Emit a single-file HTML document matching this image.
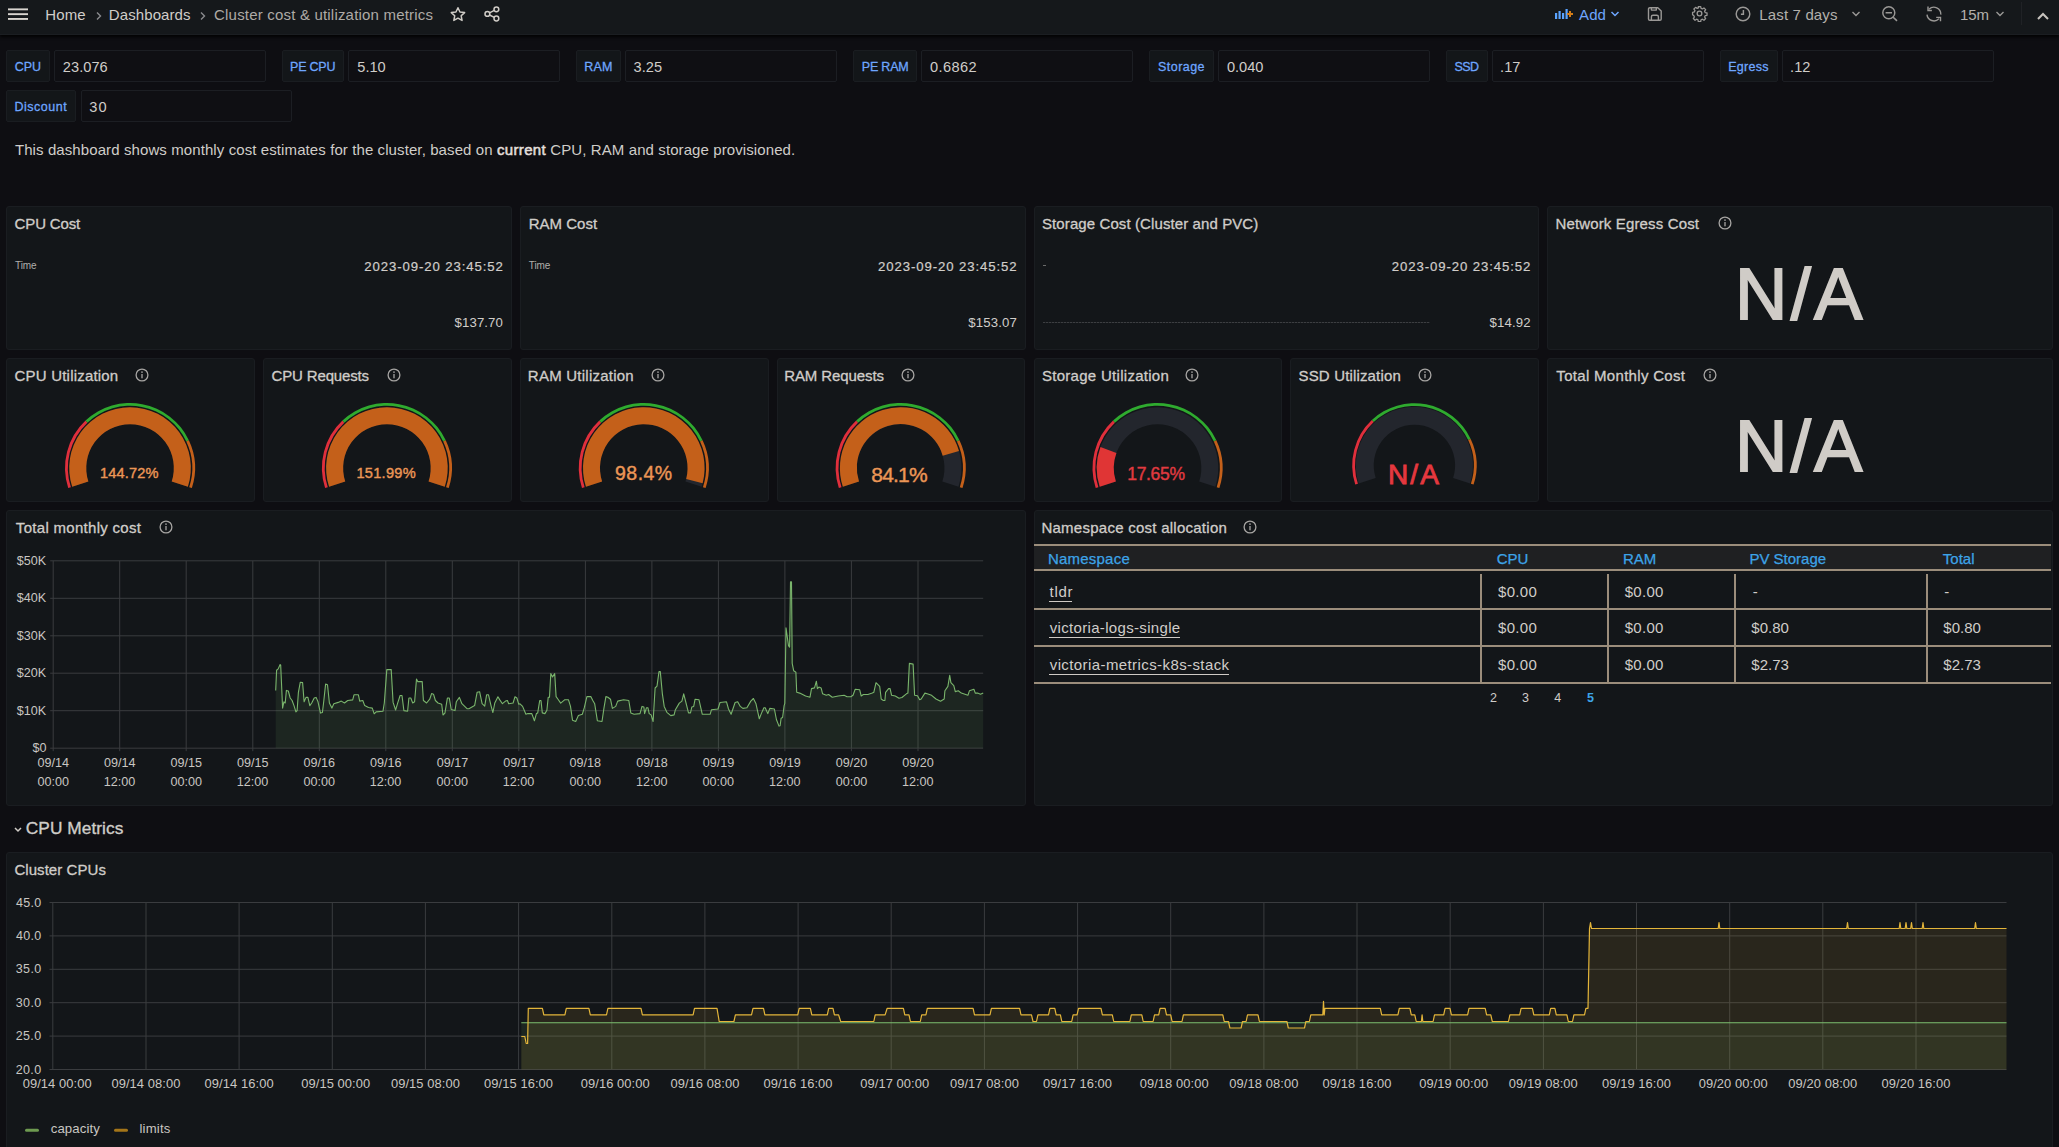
<!DOCTYPE html><html><head><meta charset="utf-8"><style>
*{box-sizing:border-box;margin:0;padding:0}
html,body{width:2059px;height:1147px;overflow:hidden;background:#0e0e12;font-family:"Liberation Sans",sans-serif;color:#d0cdc9}
.a{position:absolute;white-space:nowrap}
.box{position:absolute;border-radius:2px}
.p{position:absolute;background:#131619;border:1px solid #1a1d21;border-radius:3px}
</style></head><body>
<div class="a" style="left:0;top:0;width:2059px;height:35px;background:#15181b;border-bottom:1px solid #1b1e22;box-shadow:0 2px 3px rgba(0,0,0,0.85)"></div>
<svg class="a" style="left:0;top:0" width="40" height="35"><rect x="8" y="8.4" width="20" height="1.9" fill="#d8d4cf"/><rect x="8" y="13.2" width="20" height="1.9" fill="#d8d4cf"/><rect x="8" y="18" width="20" height="1.9" fill="#d8d4cf"/></svg>
<div class="a" style="top:14.60px;font-size:15px;color:#d0cdc9;line-height:0;letter-spacing:0.133px;left:45.30px;">Home</div>
<svg class="a" style="left:95px;top:10px" width="8" height="12" viewBox="0 0 8 12"><path d="M2 2.5 L5.5 6 L2 9.5" stroke="#8a8a8e" stroke-width="1.4" fill="none"/></svg>
<div class="a" style="top:14.60px;font-size:15px;color:#d0cdc9;line-height:0;letter-spacing:0.097px;left:108.80px;">Dashboards</div>
<svg class="a" style="left:199px;top:10px" width="8" height="12" viewBox="0 0 8 12"><path d="M2 2.5 L5.5 6 L2 9.5" stroke="#8a8a8e" stroke-width="1.4" fill="none"/></svg>
<div class="a" style="top:14.60px;font-size:15px;color:#aeaaa6;line-height:0;letter-spacing:0.192px;left:214.05px;">Cluster cost &amp; utilization metrics</div>
<svg class="a" style="left:448px;top:5px" width="20" height="20" viewBox="0 0 20 20"><path d="M9.95 2.75 L11.95 7.00 L16.61 7.59 L13.18 10.80 L14.06 15.41 L9.95 13.15 L5.84 15.41 L6.72 10.80 L3.29 7.59 L7.95 7.00Z" fill="none" stroke="#d0ccc7" stroke-width="1.5" stroke-linejoin="round"/></svg>
<svg class="a" style="left:484px;top:6px" width="16" height="16" viewBox="0 0 16 16"><circle cx="12.4" cy="3.35" r="2.4" fill="none" stroke="#d0ccc7" stroke-width="1.5"/><circle cx="12.4" cy="12.5" r="2.4" fill="none" stroke="#d0ccc7" stroke-width="1.5"/><circle cx="3.4" cy="7.9" r="2.4" fill="none" stroke="#d0ccc7" stroke-width="1.5"/><path d="M5.5 6.8 L10.3 4.4 M5.5 9 L10.3 11.4" stroke="#d0ccc7" stroke-width="1.5"/></svg>
<svg class="a" style="left:1554px;top:8px" width="20" height="12" viewBox="0 0 20 12"><rect x="1" y="5" width="2.2" height="6" fill="#5aa3ff"/><rect x="4.5" y="3" width="2.2" height="8" fill="#5aa3ff"/><rect x="8" y="5" width="2.2" height="6" fill="#5aa3ff"/><rect x="11.5" y="1" width="2.2" height="10" fill="#5aa3ff"/><path d="M16 3 V9 M13 6 H19" stroke="#d27c18" stroke-width="2"/></svg>
<div class="a" style="top:14.60px;font-size:15px;color:#6ea6ff;line-height:0;letter-spacing:0.137px;left:1579.00px;">Add</div>
<svg class="a" style="left:1610px;top:10px" width="10" height="8" viewBox="0 0 10 8"><path d="M1.5 2 L5 5.5 L8.5 2" stroke="#6ea6ff" stroke-width="1.5" fill="none"/></svg>
<svg class="a" style="left:1647px;top:6px" width="16" height="16" viewBox="0 0 16 16"><path d="M2.8 1.7 H10.8 L14.2 5.1 V12.9 a1.3 1.3 0 0 1 -1.3 1.3 H2.8 a1.3 1.3 0 0 1 -1.3 -1.3 V3 a1.3 1.3 0 0 1 1.3 -1.3z M4.4 1.7 V4.1 H9.3 V1.7 M4.4 14.2 V10.8 a1.6 1.6 0 0 1 1.6 -1.6 H9.8 a1.6 1.6 0 0 1 1.6 1.6 V14.2" fill="none" stroke="#9a9896" stroke-width="1.4" stroke-linejoin="round"/></svg>
<svg class="a" style="left:1690.5px;top:5.3px" width="17" height="17" viewBox="0 0 24 24"><circle cx="12" cy="12" r="3.3" fill="none" stroke="#9a9896" stroke-width="1.9"/><path d="M10.3 2.2h3.4l.5 2.6 1.9.8 2.2-1.5 2.4 2.4-1.5 2.2.8 1.9 2.6.5v3.4l-2.6.5-.8 1.9 1.5 2.2-2.4 2.4-2.2-1.5-1.9.8-.5 2.6h-3.4l-.5-2.6-1.9-.8-2.2 1.5-2.4-2.4 1.5-2.2-.8-1.9L2.2 13.7v-3.4l2.6-.5.8-1.9-1.5-2.2 2.4-2.4 2.2 1.5 1.9-.8z" fill="none" stroke="#9a9896" stroke-width="1.8" stroke-linejoin="round"/></svg>
<svg class="a" style="left:1735px;top:6px" width="16" height="16" viewBox="0 0 16 16"><circle cx="8" cy="8" r="6.8" fill="none" stroke="#9a9896" stroke-width="1.45"/><path d="M8.4 4 V8.3 H5.9" fill="none" stroke="#9a9896" stroke-width="1.45"/></svg>
<div class="a" style="top:14.80px;font-size:15px;color:#b3b0ac;line-height:0;letter-spacing:0.150px;left:1759.30px;">Last 7 days</div>
<svg class="a" style="left:1851px;top:10px" width="10" height="8" viewBox="0 0 10 8"><path d="M1.5 2 L5 5.5 L8.5 2" stroke="#9a9896" stroke-width="1.4" fill="none"/></svg>
<svg class="a" style="left:1881px;top:5.2px" width="18" height="17" viewBox="0 0 18 17"><circle cx="7.8" cy="7.7" r="6.0" fill="none" stroke="#9a9896" stroke-width="1.45"/><path d="M4.6 7.7 H11 M12.2 12.2 L16 15.9" stroke="#9a9896" stroke-width="1.6"/></svg>
<svg class="a" style="left:1922px;top:3px" width="24" height="22" viewBox="0 0 24 22"><path d="M7.0 6.3 A6.9 6.9 0 0 1 18.8 11.6 M5.0 11.6 A6.9 6.9 0 0 0 17.0 15.6" fill="none" stroke="#9a9896" stroke-width="1.4"/><path d="M6.0 3.4 V7.5 H9.9 M14.2 14.4 H18.5 V18.3" fill="none" stroke="#9a9896" stroke-width="1.4"/></svg>
<div class="a" style="top:14.80px;font-size:15px;color:#b3b0ac;line-height:0;letter-spacing:-0.037px;left:1959.88px;">15m</div>
<svg class="a" style="left:1995px;top:10px" width="10" height="8" viewBox="0 0 10 8"><path d="M1.5 2 L5 5.5 L8.5 2" stroke="#9a9896" stroke-width="1.4" fill="none"/></svg>
<div class="a" style="left:2021px;top:2px;width:1px;height:23px;background:#202226"></div>
<svg class="a" style="left:2036px;top:11px" width="14" height="10" viewBox="0 0 14 10"><path d="M2 8 L7 3 L12 8" stroke="#c8c4bf" stroke-width="2" fill="none"/></svg>
<div class="box" style="left:6px;top:50px;width:44px;height:32px;background:#131619;border:1px solid #1a1d21"></div>
<div class="box" style="left:54px;top:50px;width:212px;height:32px;background:#0f0f13;border:1px solid #1c1e23"></div>
<div class="a" style="top:66.87px;font-size:12.5px;color:#6ea6ff;line-height:0;letter-spacing:-0.146px;-webkit-text-stroke:0.28px #6ea6ff;left:14.82px;">CPU</div>
<div class="a" style="top:67.14px;font-size:14.6px;color:#d0cdc9;line-height:0;letter-spacing:0.048px;left:62.87px;">23.076</div>
<div class="box" style="left:282px;top:50px;width:62px;height:32px;background:#131619;border:1px solid #1a1d21"></div>
<div class="box" style="left:348px;top:50px;width:212px;height:32px;background:#0f0f13;border:1px solid #1c1e23"></div>
<div class="a" style="top:66.87px;font-size:12.5px;color:#6ea6ff;line-height:0;letter-spacing:-0.228px;-webkit-text-stroke:0.28px #6ea6ff;left:290.04px;">PE CPU</div>
<div class="a" style="top:67.14px;font-size:14.6px;color:#d0cdc9;line-height:0;left:357.32px;">5.10</div>
<div class="box" style="left:576px;top:50px;width:45px;height:32px;background:#131619;border:1px solid #1a1d21"></div>
<div class="box" style="left:625px;top:50px;width:212px;height:32px;background:#0f0f13;border:1px solid #1c1e23"></div>
<div class="a" style="top:66.87px;font-size:12.5px;color:#6ea6ff;line-height:0;letter-spacing:0.135px;-webkit-text-stroke:0.28px #6ea6ff;left:584.34px;">RAM</div>
<div class="a" style="top:67.14px;font-size:14.6px;color:#d0cdc9;line-height:0;left:633.62px;">3.25</div>
<div class="box" style="left:853px;top:50px;width:64px;height:32px;background:#131619;border:1px solid #1a1d21"></div>
<div class="box" style="left:921px;top:50px;width:212px;height:32px;background:#0f0f13;border:1px solid #1c1e23"></div>
<div class="a" style="top:66.87px;font-size:12.5px;color:#6ea6ff;line-height:0;letter-spacing:-0.211px;-webkit-text-stroke:0.28px #6ea6ff;left:861.84px;">PE RAM</div>
<div class="a" style="top:67.14px;font-size:14.6px;color:#d0cdc9;line-height:0;letter-spacing:0.368px;left:930.12px;">0.6862</div>
<div class="box" style="left:1149px;top:50px;width:65px;height:32px;background:#131619;border:1px solid #1a1d21"></div>
<div class="box" style="left:1218px;top:50px;width:212px;height:32px;background:#0f0f13;border:1px solid #1c1e23"></div>
<div class="a" style="top:66.87px;font-size:12.5px;color:#6ea6ff;line-height:0;letter-spacing:0.466px;-webkit-text-stroke:0.28px #6ea6ff;left:1157.98px;">Storage</div>
<div class="a" style="top:67.14px;font-size:14.6px;color:#d0cdc9;line-height:0;left:1226.92px;">0.040</div>
<div class="box" style="left:1446px;top:50px;width:42px;height:32px;background:#131619;border:1px solid #1a1d21"></div>
<div class="box" style="left:1492px;top:50px;width:212px;height:32px;background:#0f0f13;border:1px solid #1c1e23"></div>
<div class="a" style="top:66.87px;font-size:12.5px;color:#6ea6ff;line-height:0;letter-spacing:-0.521px;-webkit-text-stroke:0.28px #6ea6ff;left:1454.38px;">SSD</div>
<div class="a" style="top:67.14px;font-size:14.6px;color:#d0cdc9;line-height:0;left:1500.09px;">.17</div>
<div class="box" style="left:1720px;top:50px;width:58px;height:32px;background:#131619;border:1px solid #1a1d21"></div>
<div class="box" style="left:1782px;top:50px;width:212px;height:32px;background:#0f0f13;border:1px solid #1c1e23"></div>
<div class="a" style="top:66.87px;font-size:12.5px;color:#6ea6ff;line-height:0;letter-spacing:0.297px;-webkit-text-stroke:0.28px #6ea6ff;left:1728.24px;">Egress</div>
<div class="a" style="top:67.14px;font-size:14.6px;color:#d0cdc9;line-height:0;left:1790.09px;">.12</div>
<div class="box" style="left:6px;top:90px;width:70px;height:32px;background:#131619;border:1px solid #1a1d21"></div>
<div class="box" style="left:81px;top:90px;width:211px;height:32px;background:#0f0f13;border:1px solid #1c1e23"></div>
<div class="a" style="top:106.87px;font-size:12.5px;color:#6ea6ff;line-height:0;letter-spacing:0.508px;-webkit-text-stroke:0.28px #6ea6ff;left:14.44px;">Discount</div>
<div class="a" style="top:107.14px;font-size:14.6px;color:#d0cdc9;line-height:0;letter-spacing:1.289px;left:89.22px;">30</div>
<div class="a" style="left:14.90px;top:149.70px;font-size:15px;line-height:0;color:#d0cdc9;letter-spacing:0.097px">This dashboard shows monthly cost estimates for the cluster, based on <span style="-webkit-text-stroke:0.55px #e2dfdb;color:#e2dfdb;letter-spacing:0.35px">current</span> CPU, RAM and storage provisioned.</div>
<div class="p" style="left:6.00px;top:206px;width:505.75px;height:144px"></div>
<div class="p" style="left:519.75px;top:206px;width:505.75px;height:144px"></div>
<div class="p" style="left:1033.50px;top:206px;width:505.75px;height:144px"></div>
<div class="p" style="left:1547.25px;top:206px;width:505.75px;height:144px"></div>
<div class="a" style="top:224.20px;font-size:15px;color:#d0cdc9;line-height:0;letter-spacing:-0.150px;-webkit-text-stroke:0.3px #d0cdc9;left:14.60px;">CPU Cost</div>
<div class="a" style="top:224.20px;font-size:15px;color:#d0cdc9;line-height:0;letter-spacing:0.021px;-webkit-text-stroke:0.3px #d0cdc9;left:528.65px;">RAM Cost</div>
<div class="a" style="top:224.20px;font-size:15px;color:#d0cdc9;line-height:0;letter-spacing:0.100px;-webkit-text-stroke:0.3px #d0cdc9;left:1041.98px;">Storage Cost (Cluster and PVC)</div>
<div class="a" style="top:224.20px;font-size:15px;color:#d0cdc9;line-height:0;letter-spacing:0.146px;-webkit-text-stroke:0.3px #d0cdc9;left:1555.45px;">Network Egress Cost</div>
<svg class="a" style="left:1717.5px;top:215.7px" width="14" height="14" viewBox="0 0 14 14"><circle cx="7" cy="7" r="5.9" fill="none" stroke="#a7a5a3" stroke-width="1.3"/><rect x="6.35" y="6" width="1.3" height="4.3" fill="#a7a5a3"/><circle cx="7" cy="4.1" r="0.85" fill="#a7a5a3"/></svg>
<div class="a" style="top:265.54px;font-size:10px;color:#b0aeab;line-height:0;letter-spacing:-0.067px;left:15.00px;">Time</div>
<div class="a" style="top:267.03px;font-size:13.2px;color:#d0cdc9;line-height:0;letter-spacing:0.903px;-webkit-text-stroke:0.2px #d0cdc9;left:364.19px;">2023-09-20 23:45:52</div>
<div class="a" style="top:265.54px;font-size:10px;color:#b0aeab;line-height:0;letter-spacing:-0.067px;left:528.75px;">Time</div>
<div class="a" style="top:267.03px;font-size:13.2px;color:#d0cdc9;line-height:0;letter-spacing:0.903px;-webkit-text-stroke:0.2px #d0cdc9;left:877.94px;">2023-09-20 23:45:52</div>
<div class="a" style="left:1043.0px;top:265px;width:3px;height:1px;background:#6a6a6a"></div>
<div class="a" style="left:1042.5px;top:322px;width:387px;height:1px;background:repeating-linear-gradient(90deg,#3c3e41 0 2px,#202326 2px 3px)"></div>
<div class="a" style="top:267.03px;font-size:13.2px;color:#d0cdc9;line-height:0;letter-spacing:0.903px;-webkit-text-stroke:0.2px #d0cdc9;left:1391.69px;">2023-09-20 23:45:52</div>
<div class="a" style="top:322.53px;font-size:13.2px;color:#d0cdc9;line-height:0;letter-spacing:0.096px;left:454.62px;">$137.70</div>
<div class="a" style="top:322.53px;font-size:13.2px;color:#d0cdc9;line-height:0;letter-spacing:0.129px;left:968.37px;">$153.07</div>
<div class="a" style="top:322.53px;font-size:13.2px;color:#d0cdc9;line-height:0;letter-spacing:0.152px;left:1489.46px;">$14.92</div>
<div class="a" style="top:293.88px;font-size:72.5px;color:#d0ccc7;line-height:0;letter-spacing:3.244px;-webkit-text-stroke:1.8px #d0ccc7;left:1735.10px;">N/A</div>
<div class="p" style="left:6.00px;top:358px;width:248.88px;height:144px"></div>
<div class="a" style="top:376.20px;font-size:15px;color:#d0cdc9;line-height:0;letter-spacing:0.196px;-webkit-text-stroke:0.3px #d0cdc9;left:14.60px;">CPU Utilization</div>
<svg class="a" style="left:135.0px;top:367.7px" width="14" height="14" viewBox="0 0 14 14"><circle cx="7" cy="7" r="5.9" fill="none" stroke="#a7a5a3" stroke-width="1.3"/><rect x="6.35" y="6" width="1.3" height="4.3" fill="#a7a5a3"/><circle cx="7" cy="4.1" r="0.85" fill="#a7a5a3"/></svg>
<div class="p" style="left:262.88px;top:358px;width:248.88px;height:144px"></div>
<div class="a" style="top:376.20px;font-size:15px;color:#d0cdc9;line-height:0;letter-spacing:-0.159px;-webkit-text-stroke:0.3px #d0cdc9;left:271.60px;">CPU Requests</div>
<svg class="a" style="left:387.0px;top:367.7px" width="14" height="14" viewBox="0 0 14 14"><circle cx="7" cy="7" r="5.9" fill="none" stroke="#a7a5a3" stroke-width="1.3"/><rect x="6.35" y="6" width="1.3" height="4.3" fill="#a7a5a3"/><circle cx="7" cy="4.1" r="0.85" fill="#a7a5a3"/></svg>
<div class="p" style="left:519.75px;top:358px;width:248.88px;height:144px"></div>
<div class="a" style="top:376.20px;font-size:15px;color:#d0cdc9;line-height:0;letter-spacing:0.239px;-webkit-text-stroke:0.3px #d0cdc9;left:527.85px;">RAM Utilization</div>
<svg class="a" style="left:650.9px;top:367.7px" width="14" height="14" viewBox="0 0 14 14"><circle cx="7" cy="7" r="5.9" fill="none" stroke="#a7a5a3" stroke-width="1.3"/><rect x="6.35" y="6" width="1.3" height="4.3" fill="#a7a5a3"/><circle cx="7" cy="4.1" r="0.85" fill="#a7a5a3"/></svg>
<div class="p" style="left:776.62px;top:358px;width:248.88px;height:144px"></div>
<div class="a" style="top:376.20px;font-size:15px;color:#d0cdc9;line-height:0;letter-spacing:-0.086px;-webkit-text-stroke:0.3px #d0cdc9;left:784.15px;">RAM Requests</div>
<svg class="a" style="left:901.4px;top:367.7px" width="14" height="14" viewBox="0 0 14 14"><circle cx="7" cy="7" r="5.9" fill="none" stroke="#a7a5a3" stroke-width="1.3"/><rect x="6.35" y="6" width="1.3" height="4.3" fill="#a7a5a3"/><circle cx="7" cy="4.1" r="0.85" fill="#a7a5a3"/></svg>
<div class="p" style="left:1033.50px;top:358px;width:248.88px;height:144px"></div>
<div class="a" style="top:376.20px;font-size:15px;color:#d0cdc9;line-height:0;letter-spacing:0.285px;-webkit-text-stroke:0.3px #d0cdc9;left:1041.98px;">Storage Utilization</div>
<svg class="a" style="left:1185.0px;top:367.7px" width="14" height="14" viewBox="0 0 14 14"><circle cx="7" cy="7" r="5.9" fill="none" stroke="#a7a5a3" stroke-width="1.3"/><rect x="6.35" y="6" width="1.3" height="4.3" fill="#a7a5a3"/><circle cx="7" cy="4.1" r="0.85" fill="#a7a5a3"/></svg>
<div class="p" style="left:1290.38px;top:358px;width:248.88px;height:144px"></div>
<div class="a" style="top:376.20px;font-size:15px;color:#d0cdc9;line-height:0;letter-spacing:0.164px;-webkit-text-stroke:0.3px #d0cdc9;left:1298.48px;">SSD Utilization</div>
<svg class="a" style="left:1417.5px;top:367.7px" width="14" height="14" viewBox="0 0 14 14"><circle cx="7" cy="7" r="5.9" fill="none" stroke="#a7a5a3" stroke-width="1.3"/><rect x="6.35" y="6" width="1.3" height="4.3" fill="#a7a5a3"/><circle cx="7" cy="4.1" r="0.85" fill="#a7a5a3"/></svg>
<div class="p" style="left:1547.25px;top:358px;width:505.75px;height:144px"></div>
<div class="a" style="top:376.20px;font-size:15px;color:#d0cdc9;line-height:0;letter-spacing:0.306px;-webkit-text-stroke:0.3px #d0cdc9;left:1556.35px;">Total Monthly Cost</div>
<svg class="a" style="left:1702.5px;top:367.7px" width="14" height="14" viewBox="0 0 14 14"><circle cx="7" cy="7" r="5.9" fill="none" stroke="#a7a5a3" stroke-width="1.3"/><rect x="6.35" y="6" width="1.3" height="4.3" fill="#a7a5a3"/><circle cx="7" cy="4.1" r="0.85" fill="#a7a5a3"/></svg>
<div class="a" style="top:445.78px;font-size:72.5px;color:#d0ccc7;line-height:0;letter-spacing:3.244px;-webkit-text-stroke:1.8px #d0ccc7;left:1735.10px;">N/A</div>
<div class="p" style="left:6.00px;top:510px;width:1019.50px;height:296px"></div>
<div class="p" style="left:1033.50px;top:510px;width:1019.50px;height:296px"></div>
<div class="a" style="top:528.20px;font-size:15px;color:#d0cdc9;line-height:0;letter-spacing:0.299px;-webkit-text-stroke:0.3px #d0cdc9;left:15.85px;">Total monthly cost</div>
<svg class="a" style="left:159.0px;top:519.7px" width="14" height="14" viewBox="0 0 14 14"><circle cx="7" cy="7" r="5.9" fill="none" stroke="#a7a5a3" stroke-width="1.3"/><rect x="6.35" y="6" width="1.3" height="4.3" fill="#a7a5a3"/><circle cx="7" cy="4.1" r="0.85" fill="#a7a5a3"/></svg>
<div class="a" style="top:528.20px;font-size:15px;color:#d0cdc9;line-height:0;letter-spacing:0.255px;-webkit-text-stroke:0.3px #d0cdc9;left:1041.45px;">Namespace cost allocation</div>
<svg class="a" style="left:1243.0px;top:519.7px" width="14" height="14" viewBox="0 0 14 14"><circle cx="7" cy="7" r="5.9" fill="none" stroke="#a7a5a3" stroke-width="1.3"/><rect x="6.35" y="6" width="1.3" height="4.3" fill="#a7a5a3"/><circle cx="7" cy="4.1" r="0.85" fill="#a7a5a3"/></svg>
<svg class="a" style="left:13px;top:826.3px" width="10" height="8" viewBox="0 0 10 8"><path d="M2 2 L5 5 L8 2" stroke="#d0ccc7" stroke-width="1.5" fill="none"/></svg>
<div class="a" style="top:827.61px;font-size:17.3px;color:#d0cdc9;line-height:0;letter-spacing:0.057px;-webkit-text-stroke:0.35px #d0cdc9;left:25.81px;">CPU Metrics</div>
<div class="p" style="left:6px;top:852px;width:2047px;height:320px"></div>
<div class="a" style="top:870.20px;font-size:15px;color:#d0cdc9;line-height:0;letter-spacing:0.059px;-webkit-text-stroke:0.3px #d0cdc9;left:14.40px;">Cluster CPUs</div>
<svg class="a" style="left:0;top:0" width="2059" height="1147"><line x1="50.2" y1="560.8" x2="983.2" y2="560.8" stroke="#3a3c3f" stroke-width="1"/><line x1="50.2" y1="598.3" x2="983.2" y2="598.3" stroke="#3a3c3f" stroke-width="1"/><line x1="50.2" y1="635.8" x2="983.2" y2="635.8" stroke="#3a3c3f" stroke-width="1"/><line x1="50.2" y1="673.2" x2="983.2" y2="673.2" stroke="#3a3c3f" stroke-width="1"/><line x1="50.2" y1="710.7" x2="983.2" y2="710.7" stroke="#3a3c3f" stroke-width="1"/><line x1="50.2" y1="748.2" x2="983.2" y2="748.2" stroke="#3a3c3f" stroke-width="1"/><line x1="53.2" y1="560.8" x2="53.2" y2="751.2" stroke="#3a3c3f" stroke-width="1"/><line x1="119.7" y1="560.8" x2="119.7" y2="751.2" stroke="#3a3c3f" stroke-width="1"/><line x1="186.2" y1="560.8" x2="186.2" y2="751.2" stroke="#3a3c3f" stroke-width="1"/><line x1="252.8" y1="560.8" x2="252.8" y2="751.2" stroke="#3a3c3f" stroke-width="1"/><line x1="319.3" y1="560.8" x2="319.3" y2="751.2" stroke="#3a3c3f" stroke-width="1"/><line x1="385.8" y1="560.8" x2="385.8" y2="751.2" stroke="#3a3c3f" stroke-width="1"/><line x1="452.3" y1="560.8" x2="452.3" y2="751.2" stroke="#3a3c3f" stroke-width="1"/><line x1="518.8" y1="560.8" x2="518.8" y2="751.2" stroke="#3a3c3f" stroke-width="1"/><line x1="585.4" y1="560.8" x2="585.4" y2="751.2" stroke="#3a3c3f" stroke-width="1"/><line x1="651.9" y1="560.8" x2="651.9" y2="751.2" stroke="#3a3c3f" stroke-width="1"/><line x1="718.4" y1="560.8" x2="718.4" y2="751.2" stroke="#3a3c3f" stroke-width="1"/><line x1="784.9" y1="560.8" x2="784.9" y2="751.2" stroke="#3a3c3f" stroke-width="1"/><line x1="851.4" y1="560.8" x2="851.4" y2="751.2" stroke="#3a3c3f" stroke-width="1"/><line x1="918.0" y1="560.8" x2="918.0" y2="751.2" stroke="#3a3c3f" stroke-width="1"/></svg>
<div class="a" style="top:560.63px;font-size:12.6px;color:#c9c6c2;line-height:0;left:16.70px;">$50K</div>
<div class="a" style="top:598.13px;font-size:12.6px;color:#c9c6c2;line-height:0;left:16.70px;">$40K</div>
<div class="a" style="top:635.63px;font-size:12.6px;color:#c9c6c2;line-height:0;left:16.70px;">$30K</div>
<div class="a" style="top:673.03px;font-size:12.6px;color:#c9c6c2;line-height:0;left:16.70px;">$20K</div>
<div class="a" style="top:710.53px;font-size:12.6px;color:#c9c6c2;line-height:0;left:16.70px;">$10K</div>
<div class="a" style="top:748.03px;font-size:12.6px;color:#c9c6c2;line-height:0;left:32.45px;">$0</div>
<div class="a" style="top:762.63px;font-size:12.6px;color:#c9c6c2;line-height:0;left:37.39px;">09/14</div>
<div class="a" style="top:781.63px;font-size:12.6px;color:#c9c6c2;line-height:0;left:37.42px;">00:00</div>
<div class="a" style="top:762.63px;font-size:12.6px;color:#c9c6c2;line-height:0;left:103.91px;">09/14</div>
<div class="a" style="top:781.63px;font-size:12.6px;color:#c9c6c2;line-height:0;left:103.72px;">12:00</div>
<div class="a" style="top:762.63px;font-size:12.6px;color:#c9c6c2;line-height:0;left:170.49px;">09/15</div>
<div class="a" style="top:781.63px;font-size:12.6px;color:#c9c6c2;line-height:0;left:170.46px;">00:00</div>
<div class="a" style="top:762.63px;font-size:12.6px;color:#c9c6c2;line-height:0;left:237.01px;">09/15</div>
<div class="a" style="top:781.63px;font-size:12.6px;color:#c9c6c2;line-height:0;left:236.76px;">12:00</div>
<div class="a" style="top:762.63px;font-size:12.6px;color:#c9c6c2;line-height:0;left:303.53px;">09/16</div>
<div class="a" style="top:781.63px;font-size:12.6px;color:#c9c6c2;line-height:0;left:303.50px;">00:00</div>
<div class="a" style="top:762.63px;font-size:12.6px;color:#c9c6c2;line-height:0;left:370.05px;">09/16</div>
<div class="a" style="top:781.63px;font-size:12.6px;color:#c9c6c2;line-height:0;left:369.80px;">12:00</div>
<div class="a" style="top:762.63px;font-size:12.6px;color:#c9c6c2;line-height:0;left:436.63px;">09/17</div>
<div class="a" style="top:781.63px;font-size:12.6px;color:#c9c6c2;line-height:0;left:436.54px;">00:00</div>
<div class="a" style="top:762.63px;font-size:12.6px;color:#c9c6c2;line-height:0;left:503.15px;">09/17</div>
<div class="a" style="top:781.63px;font-size:12.6px;color:#c9c6c2;line-height:0;left:502.84px;">12:00</div>
<div class="a" style="top:762.63px;font-size:12.6px;color:#c9c6c2;line-height:0;left:569.61px;">09/18</div>
<div class="a" style="top:781.63px;font-size:12.6px;color:#c9c6c2;line-height:0;left:569.58px;">00:00</div>
<div class="a" style="top:762.63px;font-size:12.6px;color:#c9c6c2;line-height:0;left:636.13px;">09/18</div>
<div class="a" style="top:781.63px;font-size:12.6px;color:#c9c6c2;line-height:0;left:635.88px;">12:00</div>
<div class="a" style="top:762.63px;font-size:12.6px;color:#c9c6c2;line-height:0;left:702.68px;">09/19</div>
<div class="a" style="top:781.63px;font-size:12.6px;color:#c9c6c2;line-height:0;left:702.62px;">00:00</div>
<div class="a" style="top:762.63px;font-size:12.6px;color:#c9c6c2;line-height:0;left:769.20px;">09/19</div>
<div class="a" style="top:781.63px;font-size:12.6px;color:#c9c6c2;line-height:0;left:768.92px;">12:00</div>
<div class="a" style="top:762.63px;font-size:12.6px;color:#c9c6c2;line-height:0;left:835.66px;">09/20</div>
<div class="a" style="top:781.63px;font-size:12.6px;color:#c9c6c2;line-height:0;left:835.66px;">00:00</div>
<div class="a" style="top:762.63px;font-size:12.6px;color:#c9c6c2;line-height:0;left:902.18px;">09/20</div>
<div class="a" style="top:781.63px;font-size:12.6px;color:#c9c6c2;line-height:0;left:901.96px;">12:00</div>
<svg class="a" style="left:0;top:0" width="2059" height="1147"><path d="M275.7 690.4 L276.6 670.2 L278.2 668.9 L280.1 664.5 L280.7 665.2 L282.6 708.1 L283.9 701.8 L285.2 703.0 L286.4 690.4 L288.3 691.0 L290.2 698.0 L292.1 700.5 L294.0 705.6 L295.9 711.9 L297.1 710.6 L298.4 692.3 L300.3 682.2 L302.6 682.6 L304.1 701.8 L306.0 697.4 L307.9 697.4 L309.8 705.6 L311.7 703.0 L314.2 698.0 L316.1 697.4 L318.0 701.8 L320.5 713.1 L322.4 712.5 L323.7 701.8 L325.6 684.1 L327.5 684.7 L329.4 703.0 L331.9 708.1 L333.8 703.7 L338.2 702.4 L341.3 701.1 L344.5 703.0 L347.7 700.5 L352.7 699.9 L354.0 694.8 L358.4 694.8 L359.7 701.1 L362.8 700.5 L364.7 705.6 L368.5 707.5 L372.3 708.1 L374.2 713.8 L376.1 711.9 L383.0 711.2 L384.3 703.0 L386.8 669.6 L391.2 669.6 L393.1 702.4 L395.6 710.0 L397.5 703.7 L400.1 695.5 L402.0 695.5 L403.9 710.6 L407.6 711.2 L408.9 698.0 L410.8 698.0 L412.7 703.0 L414.6 701.8 L416.5 679.0 L417.7 681.6 L422.2 681.6 L423.4 700.5 L426.6 703.0 L429.7 699.2 L431.6 693.6 L433.5 694.2 L435.4 700.5 L438.0 703.0 L441.7 704.3 L443.0 715.0 L444.9 713.1 L447.4 698.0 L449.3 698.0 L451.2 709.4 L455.0 710.6 L456.3 701.8 L459.4 697.4 L461.9 703.7 L467.0 708.7 L468.9 708.7 L474.6 705.6 L477.1 692.3 L479.6 691.7 L482.1 703.7 L484.7 706.2 L486.6 694.8 L488.5 694.8 L491.0 705.6 L492.9 712.5 L494.8 703.0 L497.9 696.7 L499.8 699.9 L502.4 703.7 L505.5 701.1 L507.4 700.5 L508.7 703.7 L513.1 703.0 L515.0 696.7 L516.9 698.0 L518.8 704.3 L520.0 703.8 L522.6 706.4 L525.9 714.3 L527.9 713.6 L531.8 713.6 L534.4 720.8 L536.4 713.6 L537.7 712.9 L539.7 700.5 L541.0 700.5 L542.3 712.9 L544.9 713.6 L546.9 710.3 L548.2 697.2 L549.5 697.2 L550.8 673.6 L552.5 676.9 L554.7 673.6 L556.1 696.6 L558.0 699.2 L560.7 703.1 L564.6 699.8 L568.5 699.8 L570.5 706.4 L572.5 720.2 L575.7 721.5 L578.4 715.6 L582.3 714.3 L584.3 707.7 L586.9 696.6 L590.8 696.6 L592.8 700.5 L594.7 703.8 L597.4 720.8 L602.0 721.5 L603.9 708.4 L605.9 696.6 L607.9 697.2 L610.5 699.2 L612.4 708.4 L615.7 706.4 L617.7 701.1 L623.6 699.8 L628.8 700.5 L630.8 712.9 L634.1 714.3 L640.0 713.6 L642.0 706.4 L643.9 707.0 L644.6 713.6 L646.5 707.7 L647.9 707.7 L649.2 713.6 L651.1 714.9 L653.1 721.5 L655.1 688.0 L657.0 686.1 L659.0 671.6 L660.3 671.6 L662.3 693.3 L664.2 706.4 L666.9 712.3 L670.8 715.6 L674.1 714.9 L675.4 709.7 L679.3 703.1 L681.9 701.1 L683.7 693.9 L685.9 702.5 L688.5 712.9 L690.5 712.9 L691.8 707.0 L693.7 706.4 L695.1 699.2 L699.0 699.8 L702.3 714.3 L706.9 714.3 L710.1 714.3 L711.5 709.7 L718.0 709.0 L720.0 702.5 L726.5 701.8 L728.5 709.0 L731.1 714.3 L735.1 702.5 L737.7 701.8 L740.3 706.4 L742.9 708.4 L746.9 707.7 L750.8 701.1 L753.4 698.5 L756.0 703.8 L759.3 718.8 L761.3 713.6 L763.9 707.7 L765.2 707.7 L767.8 713.6 L769.8 708.4 L774.4 709.0 L776.4 719.5 L779.0 726.1 L780.1 725.7 L781.1 718.3 L782.6 717.5 L784.1 705.7 L784.8 703.4 L786.0 627.8 L788.5 645.6 L789.6 647.1 L790.5 581.9 L791.5 581.9 L792.2 663.4 L793.7 670.8 L795.9 672.3 L796.7 692.3 L799.7 693.1 L805.6 696.0 L810.0 697.2 L811.5 688.6 L814.5 687.9 L816.4 681.2 L817.4 688.6 L818.9 687.1 L821.1 687.9 L822.6 693.8 L826.3 695.3 L828.6 694.5 L832.3 697.2 L838.2 696.0 L844.1 695.3 L847.1 696.8 L850.8 696.8 L853.0 695.3 L855.2 689.3 L859.7 689.8 L861.2 696.0 L863.4 694.5 L867.9 694.5 L872.3 693.1 L873.8 692.3 L876.0 682.7 L878.2 684.9 L879.7 686.4 L881.2 699.0 L883.4 700.5 L884.9 700.5 L885.6 692.3 L888.6 688.6 L890.1 688.6 L891.6 695.3 L895.3 696.0 L899.0 698.2 L901.9 697.5 L906.4 693.8 L907.9 693.1 L909.4 663.4 L913.1 664.1 L914.6 695.3 L917.5 695.7 L919.7 699.7 L921.2 699.0 L924.9 693.1 L927.2 693.8 L931.6 695.3 L936.0 699.0 L940.5 701.2 L944.2 699.0 L944.9 690.8 L947.9 686.4 L949.7 675.3 L950.9 682.7 L953.8 685.6 L955.3 691.6 L958.3 690.8 L961.3 693.1 L967.9 695.3 L969.4 690.8 L973.9 689.3 L975.3 693.1 L977.6 693.1 L980.5 694.2 L983.2 693.1 L983.2 748.2 L275.7 748.2Z" fill="#73bf69" fill-opacity="0.10" stroke="none"/><path d="M275.7 690.4 L276.6 670.2 L278.2 668.9 L280.1 664.5 L280.7 665.2 L282.6 708.1 L283.9 701.8 L285.2 703.0 L286.4 690.4 L288.3 691.0 L290.2 698.0 L292.1 700.5 L294.0 705.6 L295.9 711.9 L297.1 710.6 L298.4 692.3 L300.3 682.2 L302.6 682.6 L304.1 701.8 L306.0 697.4 L307.9 697.4 L309.8 705.6 L311.7 703.0 L314.2 698.0 L316.1 697.4 L318.0 701.8 L320.5 713.1 L322.4 712.5 L323.7 701.8 L325.6 684.1 L327.5 684.7 L329.4 703.0 L331.9 708.1 L333.8 703.7 L338.2 702.4 L341.3 701.1 L344.5 703.0 L347.7 700.5 L352.7 699.9 L354.0 694.8 L358.4 694.8 L359.7 701.1 L362.8 700.5 L364.7 705.6 L368.5 707.5 L372.3 708.1 L374.2 713.8 L376.1 711.9 L383.0 711.2 L384.3 703.0 L386.8 669.6 L391.2 669.6 L393.1 702.4 L395.6 710.0 L397.5 703.7 L400.1 695.5 L402.0 695.5 L403.9 710.6 L407.6 711.2 L408.9 698.0 L410.8 698.0 L412.7 703.0 L414.6 701.8 L416.5 679.0 L417.7 681.6 L422.2 681.6 L423.4 700.5 L426.6 703.0 L429.7 699.2 L431.6 693.6 L433.5 694.2 L435.4 700.5 L438.0 703.0 L441.7 704.3 L443.0 715.0 L444.9 713.1 L447.4 698.0 L449.3 698.0 L451.2 709.4 L455.0 710.6 L456.3 701.8 L459.4 697.4 L461.9 703.7 L467.0 708.7 L468.9 708.7 L474.6 705.6 L477.1 692.3 L479.6 691.7 L482.1 703.7 L484.7 706.2 L486.6 694.8 L488.5 694.8 L491.0 705.6 L492.9 712.5 L494.8 703.0 L497.9 696.7 L499.8 699.9 L502.4 703.7 L505.5 701.1 L507.4 700.5 L508.7 703.7 L513.1 703.0 L515.0 696.7 L516.9 698.0 L518.8 704.3 L520.0 703.8 L522.6 706.4 L525.9 714.3 L527.9 713.6 L531.8 713.6 L534.4 720.8 L536.4 713.6 L537.7 712.9 L539.7 700.5 L541.0 700.5 L542.3 712.9 L544.9 713.6 L546.9 710.3 L548.2 697.2 L549.5 697.2 L550.8 673.6 L552.5 676.9 L554.7 673.6 L556.1 696.6 L558.0 699.2 L560.7 703.1 L564.6 699.8 L568.5 699.8 L570.5 706.4 L572.5 720.2 L575.7 721.5 L578.4 715.6 L582.3 714.3 L584.3 707.7 L586.9 696.6 L590.8 696.6 L592.8 700.5 L594.7 703.8 L597.4 720.8 L602.0 721.5 L603.9 708.4 L605.9 696.6 L607.9 697.2 L610.5 699.2 L612.4 708.4 L615.7 706.4 L617.7 701.1 L623.6 699.8 L628.8 700.5 L630.8 712.9 L634.1 714.3 L640.0 713.6 L642.0 706.4 L643.9 707.0 L644.6 713.6 L646.5 707.7 L647.9 707.7 L649.2 713.6 L651.1 714.9 L653.1 721.5 L655.1 688.0 L657.0 686.1 L659.0 671.6 L660.3 671.6 L662.3 693.3 L664.2 706.4 L666.9 712.3 L670.8 715.6 L674.1 714.9 L675.4 709.7 L679.3 703.1 L681.9 701.1 L683.7 693.9 L685.9 702.5 L688.5 712.9 L690.5 712.9 L691.8 707.0 L693.7 706.4 L695.1 699.2 L699.0 699.8 L702.3 714.3 L706.9 714.3 L710.1 714.3 L711.5 709.7 L718.0 709.0 L720.0 702.5 L726.5 701.8 L728.5 709.0 L731.1 714.3 L735.1 702.5 L737.7 701.8 L740.3 706.4 L742.9 708.4 L746.9 707.7 L750.8 701.1 L753.4 698.5 L756.0 703.8 L759.3 718.8 L761.3 713.6 L763.9 707.7 L765.2 707.7 L767.8 713.6 L769.8 708.4 L774.4 709.0 L776.4 719.5 L779.0 726.1 L780.1 725.7 L781.1 718.3 L782.6 717.5 L784.1 705.7 L784.8 703.4 L786.0 627.8 L788.5 645.6 L789.6 647.1 L790.5 581.9 L791.5 581.9 L792.2 663.4 L793.7 670.8 L795.9 672.3 L796.7 692.3 L799.7 693.1 L805.6 696.0 L810.0 697.2 L811.5 688.6 L814.5 687.9 L816.4 681.2 L817.4 688.6 L818.9 687.1 L821.1 687.9 L822.6 693.8 L826.3 695.3 L828.6 694.5 L832.3 697.2 L838.2 696.0 L844.1 695.3 L847.1 696.8 L850.8 696.8 L853.0 695.3 L855.2 689.3 L859.7 689.8 L861.2 696.0 L863.4 694.5 L867.9 694.5 L872.3 693.1 L873.8 692.3 L876.0 682.7 L878.2 684.9 L879.7 686.4 L881.2 699.0 L883.4 700.5 L884.9 700.5 L885.6 692.3 L888.6 688.6 L890.1 688.6 L891.6 695.3 L895.3 696.0 L899.0 698.2 L901.9 697.5 L906.4 693.8 L907.9 693.1 L909.4 663.4 L913.1 664.1 L914.6 695.3 L917.5 695.7 L919.7 699.7 L921.2 699.0 L924.9 693.1 L927.2 693.8 L931.6 695.3 L936.0 699.0 L940.5 701.2 L944.2 699.0 L944.9 690.8 L947.9 686.4 L949.7 675.3 L950.9 682.7 L953.8 685.6 L955.3 691.6 L958.3 690.8 L961.3 693.1 L967.9 695.3 L969.4 690.8 L973.9 689.3 L975.3 693.1 L977.6 693.1 L980.5 694.2 L983.2 693.1" fill="none" stroke="#7ab56c" stroke-width="1.1" stroke-linejoin="round"/><line x1="49.5" y1="902.5" x2="2006.5" y2="902.5" stroke="#3a3c3f" stroke-width="1"/><line x1="49.5" y1="935.9" x2="2006.5" y2="935.9" stroke="#3a3c3f" stroke-width="1"/><line x1="49.5" y1="969.3" x2="2006.5" y2="969.3" stroke="#3a3c3f" stroke-width="1"/><line x1="49.5" y1="1002.7" x2="2006.5" y2="1002.7" stroke="#3a3c3f" stroke-width="1"/><line x1="49.5" y1="1036.1" x2="2006.5" y2="1036.1" stroke="#3a3c3f" stroke-width="1"/><line x1="49.5" y1="1069.5" x2="2006.5" y2="1069.5" stroke="#3a3c3f" stroke-width="1"/><line x1="52.8" y1="902.5" x2="52.8" y2="1069.5" stroke="#3a3c3f" stroke-width="1"/><line x1="146.0" y1="902.5" x2="146.0" y2="1069.5" stroke="#3a3c3f" stroke-width="1"/><line x1="239.1" y1="902.5" x2="239.1" y2="1069.5" stroke="#3a3c3f" stroke-width="1"/><line x1="332.3" y1="902.5" x2="332.3" y2="1069.5" stroke="#3a3c3f" stroke-width="1"/><line x1="425.4" y1="902.5" x2="425.4" y2="1069.5" stroke="#3a3c3f" stroke-width="1"/><line x1="518.6" y1="902.5" x2="518.6" y2="1069.5" stroke="#3a3c3f" stroke-width="1"/><line x1="611.8" y1="902.5" x2="611.8" y2="1069.5" stroke="#3a3c3f" stroke-width="1"/><line x1="704.9" y1="902.5" x2="704.9" y2="1069.5" stroke="#3a3c3f" stroke-width="1"/><line x1="798.1" y1="902.5" x2="798.1" y2="1069.5" stroke="#3a3c3f" stroke-width="1"/><line x1="891.2" y1="902.5" x2="891.2" y2="1069.5" stroke="#3a3c3f" stroke-width="1"/><line x1="984.4" y1="902.5" x2="984.4" y2="1069.5" stroke="#3a3c3f" stroke-width="1"/><line x1="1077.6" y1="902.5" x2="1077.6" y2="1069.5" stroke="#3a3c3f" stroke-width="1"/><line x1="1170.7" y1="902.5" x2="1170.7" y2="1069.5" stroke="#3a3c3f" stroke-width="1"/><line x1="1263.9" y1="902.5" x2="1263.9" y2="1069.5" stroke="#3a3c3f" stroke-width="1"/><line x1="1357.0" y1="902.5" x2="1357.0" y2="1069.5" stroke="#3a3c3f" stroke-width="1"/><line x1="1450.2" y1="902.5" x2="1450.2" y2="1069.5" stroke="#3a3c3f" stroke-width="1"/><line x1="1543.4" y1="902.5" x2="1543.4" y2="1069.5" stroke="#3a3c3f" stroke-width="1"/><line x1="1636.5" y1="902.5" x2="1636.5" y2="1069.5" stroke="#3a3c3f" stroke-width="1"/><line x1="1729.7" y1="902.5" x2="1729.7" y2="1069.5" stroke="#3a3c3f" stroke-width="1"/><line x1="1822.8" y1="902.5" x2="1822.8" y2="1069.5" stroke="#3a3c3f" stroke-width="1"/><line x1="1916.0" y1="902.5" x2="1916.0" y2="1069.5" stroke="#3a3c3f" stroke-width="1"/><path d="M521.3 1022.7 L2006.5 1022.7 L2006.5 1069.5 L521.3 1069.5Z" fill="#73bf69" fill-opacity="0.10"/><path d="M521.3 1036.5 L524.8 1036.5 L526.2 1043.5 L527.6 1043.5 L528.3 1008.3 L542.4 1008.3 L543.8 1014.9 L564.9 1014.9 L566.3 1008.3 L588.9 1008.3 L590.3 1014.9 L606.5 1014.9 L607.9 1008.3 L641.0 1008.3 L642.4 1014.9 L693.1 1014.9 L694.5 1008.3 L717.0 1008.3 L719.2 1021.5 L733.9 1021.5 L735.4 1014.9 L751.5 1014.9 L753.0 1008.3 L763.5 1008.3 L764.9 1014.9 L797.0 1014.9 L797.0 1014.9 L797.7 1014.9 L799.2 1008.3 L810.4 1008.3 L811.8 1014.9 L827.3 1014.9 L828.7 1008.3 L833.0 1008.3 L834.4 1014.9 L838.6 1014.9 L840.7 1021.5 L873.8 1021.5 L875.2 1014.9 L885.1 1014.9 L887.2 1008.3 L903.4 1008.3 L904.8 1014.9 L909.0 1014.9 L910.4 1021.5 L920.3 1021.5 L921.7 1014.9 L925.9 1014.9 L927.3 1008.3 L973.1 1008.3 L974.5 1014.9 L990.0 1014.9 L991.4 1008.3 L1019.6 1008.3 L1021.0 1014.9 L1031.5 1014.9 L1033.0 1021.5 L1036.5 1021.5 L1037.9 1014.9 L1048.5 1014.9 L1049.9 1008.3 L1054.8 1008.3 L1056.2 1014.9 L1060.4 1014.9 L1061.8 1021.5 L1071.7 1021.5 L1073.1 1014.9 L1077.0 1014.9 L1077.0 1014.9 L1077.0 1014.9 L1078.5 1008.3 L1101.0 1008.3 L1102.4 1014.9 L1112.3 1014.9 L1113.7 1021.5 L1129.9 1021.5 L1131.3 1014.9 L1141.8 1014.9 L1143.2 1021.5 L1153.1 1021.5 L1154.5 1014.9 L1158.7 1014.9 L1160.1 1008.3 L1165.1 1008.3 L1166.5 1014.9 L1170.7 1014.9 L1172.1 1021.5 L1182.0 1021.5 L1183.4 1014.9 L1222.8 1014.9 L1224.2 1021.5 L1228.5 1021.5 L1229.9 1028.0 L1241.1 1028.0 L1242.5 1021.5 L1246.1 1021.5 L1247.5 1014.9 L1258.0 1014.9 L1259.4 1021.5 L1286.9 1021.5 L1288.3 1028.0 L1304.5 1028.0 L1305.9 1021.5 L1309.4 1021.5 L1310.8 1014.9 L1322.1 1014.9 L1322.8 1014.9 L1323.5 1001.3 L1324.2 1014.9 L1324.9 1008.3 L1357.0 1008.3 L1357.0 1008.3 L1380.3 1008.3 L1381.7 1014.9 L1397.9 1014.9 L1399.3 1008.3 L1409.9 1008.3 L1411.3 1014.9 L1414.8 1014.9 L1416.2 1021.5 L1421.1 1021.5 L1421.4 1021.5 L1422.1 1014.9 L1422.8 1021.5 L1423.2 1021.5 L1433.1 1021.5 L1434.5 1014.9 L1443.7 1014.9 L1445.1 1008.3 L1450.0 1008.3 L1451.4 1014.9 L1467.6 1014.9 L1469.0 1008.3 L1485.2 1008.3 L1486.6 1014.9 L1490.8 1014.9 L1492.3 1021.5 L1508.5 1021.5 L1509.9 1014.9 L1519.7 1014.9 L1521.1 1008.3 L1532.4 1008.3 L1533.8 1014.9 L1549.3 1014.9 L1550.7 1008.3 L1554.9 1008.3 L1556.3 1014.9 L1566.9 1014.9 L1568.3 1021.5 L1572.5 1021.5 L1573.9 1014.9 L1584.5 1014.9 L1585.9 1008.3 L1588.0 1008.3 L1589.5 928.5 L1590.5 922.5 L1591.5 928.5 L1718.2 928.5 L1719.0 922.5 L1719.8 928.5 L1846.7 928.5 L1847.5 922.5 L1848.3 928.5 L1899.2 928.5 L1900.0 922.5 L1900.8 928.5 L1905.2 928.5 L1906.0 922.5 L1906.8 928.5 L1910.7 928.5 L1911.5 922.5 L1912.3 928.5 L1922.2 928.5 L1923.0 922.5 L1923.8 928.5 L1974.7 928.5 L1975.5 922.5 L1976.3 928.5 L2006.5 928.5 L2006.5 1069.5 L521.3 1069.5Z" fill="#eab839" fill-opacity="0.10"/><line x1="521.3" y1="1022.7" x2="2006.5" y2="1022.7" stroke="#7dbf6f" stroke-width="1.1"/><path d="M521.3 1036.5 L524.8 1036.5 L526.2 1043.5 L527.6 1043.5 L528.3 1008.3 L542.4 1008.3 L543.8 1014.9 L564.9 1014.9 L566.3 1008.3 L588.9 1008.3 L590.3 1014.9 L606.5 1014.9 L607.9 1008.3 L641.0 1008.3 L642.4 1014.9 L693.1 1014.9 L694.5 1008.3 L717.0 1008.3 L719.2 1021.5 L733.9 1021.5 L735.4 1014.9 L751.5 1014.9 L753.0 1008.3 L763.5 1008.3 L764.9 1014.9 L797.0 1014.9 L797.0 1014.9 L797.7 1014.9 L799.2 1008.3 L810.4 1008.3 L811.8 1014.9 L827.3 1014.9 L828.7 1008.3 L833.0 1008.3 L834.4 1014.9 L838.6 1014.9 L840.7 1021.5 L873.8 1021.5 L875.2 1014.9 L885.1 1014.9 L887.2 1008.3 L903.4 1008.3 L904.8 1014.9 L909.0 1014.9 L910.4 1021.5 L920.3 1021.5 L921.7 1014.9 L925.9 1014.9 L927.3 1008.3 L973.1 1008.3 L974.5 1014.9 L990.0 1014.9 L991.4 1008.3 L1019.6 1008.3 L1021.0 1014.9 L1031.5 1014.9 L1033.0 1021.5 L1036.5 1021.5 L1037.9 1014.9 L1048.5 1014.9 L1049.9 1008.3 L1054.8 1008.3 L1056.2 1014.9 L1060.4 1014.9 L1061.8 1021.5 L1071.7 1021.5 L1073.1 1014.9 L1077.0 1014.9 L1077.0 1014.9 L1077.0 1014.9 L1078.5 1008.3 L1101.0 1008.3 L1102.4 1014.9 L1112.3 1014.9 L1113.7 1021.5 L1129.9 1021.5 L1131.3 1014.9 L1141.8 1014.9 L1143.2 1021.5 L1153.1 1021.5 L1154.5 1014.9 L1158.7 1014.9 L1160.1 1008.3 L1165.1 1008.3 L1166.5 1014.9 L1170.7 1014.9 L1172.1 1021.5 L1182.0 1021.5 L1183.4 1014.9 L1222.8 1014.9 L1224.2 1021.5 L1228.5 1021.5 L1229.9 1028.0 L1241.1 1028.0 L1242.5 1021.5 L1246.1 1021.5 L1247.5 1014.9 L1258.0 1014.9 L1259.4 1021.5 L1286.9 1021.5 L1288.3 1028.0 L1304.5 1028.0 L1305.9 1021.5 L1309.4 1021.5 L1310.8 1014.9 L1322.1 1014.9 L1322.8 1014.9 L1323.5 1001.3 L1324.2 1014.9 L1324.9 1008.3 L1357.0 1008.3 L1357.0 1008.3 L1380.3 1008.3 L1381.7 1014.9 L1397.9 1014.9 L1399.3 1008.3 L1409.9 1008.3 L1411.3 1014.9 L1414.8 1014.9 L1416.2 1021.5 L1421.1 1021.5 L1421.4 1021.5 L1422.1 1014.9 L1422.8 1021.5 L1423.2 1021.5 L1433.1 1021.5 L1434.5 1014.9 L1443.7 1014.9 L1445.1 1008.3 L1450.0 1008.3 L1451.4 1014.9 L1467.6 1014.9 L1469.0 1008.3 L1485.2 1008.3 L1486.6 1014.9 L1490.8 1014.9 L1492.3 1021.5 L1508.5 1021.5 L1509.9 1014.9 L1519.7 1014.9 L1521.1 1008.3 L1532.4 1008.3 L1533.8 1014.9 L1549.3 1014.9 L1550.7 1008.3 L1554.9 1008.3 L1556.3 1014.9 L1566.9 1014.9 L1568.3 1021.5 L1572.5 1021.5 L1573.9 1014.9 L1584.5 1014.9 L1585.9 1008.3 L1588.0 1008.3 L1589.5 928.5 L1590.5 922.5 L1591.5 928.5 L1718.2 928.5 L1719.0 922.5 L1719.8 928.5 L1846.7 928.5 L1847.5 922.5 L1848.3 928.5 L1899.2 928.5 L1900.0 922.5 L1900.8 928.5 L1905.2 928.5 L1906.0 922.5 L1906.8 928.5 L1910.7 928.5 L1911.5 922.5 L1912.3 928.5 L1922.2 928.5 L1923.0 922.5 L1923.8 928.5 L1974.7 928.5 L1975.5 922.5 L1976.3 928.5 L2006.5 928.5" fill="none" stroke="#e3b53a" stroke-width="1.2" stroke-linejoin="round"/><rect x="25" y="1128.7" width="14" height="3" rx="1.5" fill="#6e9a50"/><rect x="114" y="1128.7" width="14" height="3" rx="1.5" fill="#a47519"/></svg>
<svg class="a" style="left:0;top:0" width="2059" height="1147"><path d="M68.22 488.09 A65.0 65.0 0 0 1 85.54 420.62 L87.46 422.66 A62.2 62.2 0 0 0 70.88 487.22Z" fill="#e02f3c"/><path d="M85.54 420.62 A65.0 65.0 0 0 1 188.85 440.32 L186.32 441.52 A62.2 62.2 0 0 0 87.46 422.66Z" fill="#2fab2f"/><path d="M188.85 440.32 A65.0 65.0 0 0 1 191.86 488.09 L189.19 487.22 A62.2 62.2 0 0 0 186.32 441.52Z" fill="#c4601a"/><path d="M72.21 486.79 A60.8 60.8 0 1 1 187.86 486.79 L171.69 481.53 A43.8 43.8 0 1 0 88.38 481.53Z" fill="#23262d"/><path d="M72.21 486.79 A60.8 60.8 0 1 1 187.86 486.79 L171.69 481.53 A43.8 43.8 0 1 0 88.38 481.53Z" fill="#c4601a"/><path d="M325.09 488.09 A65.0 65.0 0 0 1 342.42 420.62 L344.33 422.66 A62.2 62.2 0 0 0 327.76 487.22Z" fill="#e02f3c"/><path d="M342.42 420.62 A65.0 65.0 0 0 1 445.73 440.32 L443.19 441.52 A62.2 62.2 0 0 0 344.33 422.66Z" fill="#2fab2f"/><path d="M445.73 440.32 A65.0 65.0 0 0 1 448.73 488.09 L446.07 487.22 A62.2 62.2 0 0 0 443.19 441.52Z" fill="#c4601a"/><path d="M329.09 486.79 A60.8 60.8 0 1 1 444.74 486.79 L428.57 481.53 A43.8 43.8 0 1 0 345.26 481.53Z" fill="#23262d"/><path d="M329.09 486.79 A60.8 60.8 0 1 1 444.74 486.79 L428.57 481.53 A43.8 43.8 0 1 0 345.26 481.53Z" fill="#c4601a"/><path d="M581.97 488.09 A65.0 65.0 0 0 1 599.29 420.62 L601.21 422.66 A62.2 62.2 0 0 0 584.63 487.22Z" fill="#e02f3c"/><path d="M599.29 420.62 A65.0 65.0 0 0 1 702.60 440.32 L700.07 441.52 A62.2 62.2 0 0 0 601.21 422.66Z" fill="#2fab2f"/><path d="M702.60 440.32 A65.0 65.0 0 0 1 705.61 488.09 L702.94 487.22 A62.2 62.2 0 0 0 700.07 441.52Z" fill="#c4601a"/><path d="M585.96 486.79 A60.8 60.8 0 1 1 701.61 486.79 L685.44 481.53 A43.8 43.8 0 1 0 602.13 481.53Z" fill="#23262d"/><path d="M585.96 486.79 A60.8 60.8 0 1 1 702.64 483.27 L686.18 479.00 A43.8 43.8 0 1 0 602.13 481.53Z" fill="#c4601a"/><path d="M838.84 488.09 A65.0 65.0 0 0 1 856.17 420.62 L858.08 422.66 A62.2 62.2 0 0 0 841.51 487.22Z" fill="#e02f3c"/><path d="M856.17 420.62 A65.0 65.0 0 0 1 959.48 440.32 L956.94 441.52 A62.2 62.2 0 0 0 858.08 422.66Z" fill="#2fab2f"/><path d="M959.48 440.32 A65.0 65.0 0 0 1 962.48 488.09 L959.82 487.22 A62.2 62.2 0 0 0 956.94 441.52Z" fill="#c4601a"/><path d="M842.84 486.79 A60.8 60.8 0 1 1 958.49 486.79 L942.32 481.53 A43.8 43.8 0 1 0 859.01 481.53Z" fill="#23262d"/><path d="M842.84 486.79 A60.8 60.8 0 1 1 959.01 450.89 L942.69 455.67 A43.8 43.8 0 1 0 859.01 481.53Z" fill="#c4601a"/><path d="M1095.72 488.09 A65.0 65.0 0 0 1 1113.04 420.62 L1114.96 422.66 A62.2 62.2 0 0 0 1098.38 487.22Z" fill="#e02f3c"/><path d="M1113.04 420.62 A65.0 65.0 0 0 1 1216.35 440.32 L1213.82 441.52 A62.2 62.2 0 0 0 1114.96 422.66Z" fill="#2fab2f"/><path d="M1216.35 440.32 A65.0 65.0 0 0 1 1219.36 488.09 L1216.69 487.22 A62.2 62.2 0 0 0 1213.82 441.52Z" fill="#c4601a"/><path d="M1099.71 486.79 A60.8 60.8 0 1 1 1215.36 486.79 L1199.19 481.53 A43.8 43.8 0 1 0 1115.88 481.53Z" fill="#23262d"/><path d="M1099.71 486.79 A60.8 60.8 0 0 1 1100.45 447.08 L1116.41 452.93 A43.8 43.8 0 0 0 1115.88 481.53Z" fill="#e03535"/><path d="M1355.26 484.62 A62.2 62.2 0 0 1 1371.83 420.06 L1373.75 422.10 A59.4 59.4 0 0 0 1357.92 483.76Z" fill="#e02f3c"/><path d="M1371.83 420.06 A62.2 62.2 0 0 1 1470.69 438.92 L1468.16 440.11 A59.4 59.4 0 0 0 1373.75 422.10Z" fill="#2fab2f"/><path d="M1470.69 438.92 A62.2 62.2 0 0 1 1473.57 484.62 L1470.91 483.76 A59.4 59.4 0 0 0 1468.16 440.11Z" fill="#c4601a"/><path d="M1358.68 483.51 A58.6 58.6 0 1 1 1470.14 483.51 L1453.12 477.98 A40.7 40.7 0 1 0 1375.70 477.98Z" fill="#23262d"/></svg>
<div class="a" style="top:902.57px;font-size:12.5px;color:#c9c6c2;line-height:0;letter-spacing:0.258px;left:16.05px;">45.0</div>
<div class="a" style="top:935.97px;font-size:12.5px;color:#c9c6c2;line-height:0;letter-spacing:0.258px;left:16.05px;">40.0</div>
<div class="a" style="top:969.37px;font-size:12.5px;color:#c9c6c2;line-height:0;letter-spacing:0.342px;left:15.80px;">35.0</div>
<div class="a" style="top:1002.77px;font-size:12.5px;color:#c9c6c2;line-height:0;letter-spacing:0.342px;left:15.80px;">30.0</div>
<div class="a" style="top:1036.17px;font-size:12.5px;color:#c9c6c2;line-height:0;letter-spacing:0.383px;left:15.68px;">25.0</div>
<div class="a" style="top:1069.57px;font-size:12.5px;color:#c9c6c2;line-height:0;letter-spacing:0.383px;left:15.68px;">20.0</div>
<div class="a" style="top:1084.13px;font-size:12.9px;color:#c9c6c2;line-height:0;letter-spacing:0.086px;left:22.68px;">09/14 00:00</div>
<div class="a" style="top:1084.13px;font-size:12.9px;color:#c9c6c2;line-height:0;letter-spacing:0.086px;left:111.44px;">09/14 08:00</div>
<div class="a" style="top:1084.13px;font-size:12.9px;color:#c9c6c2;line-height:0;letter-spacing:0.086px;left:204.60px;">09/14 16:00</div>
<div class="a" style="top:1084.13px;font-size:12.9px;color:#c9c6c2;line-height:0;letter-spacing:0.086px;left:301.26px;">09/15 00:00</div>
<div class="a" style="top:1084.13px;font-size:12.9px;color:#c9c6c2;line-height:0;letter-spacing:0.086px;left:390.92px;">09/15 08:00</div>
<div class="a" style="top:1084.13px;font-size:12.9px;color:#c9c6c2;line-height:0;letter-spacing:0.086px;left:484.08px;">09/15 16:00</div>
<div class="a" style="top:1084.13px;font-size:12.9px;color:#c9c6c2;line-height:0;letter-spacing:0.086px;left:580.74px;">09/16 00:00</div>
<div class="a" style="top:1084.13px;font-size:12.9px;color:#c9c6c2;line-height:0;letter-spacing:0.086px;left:670.40px;">09/16 08:00</div>
<div class="a" style="top:1084.13px;font-size:12.9px;color:#c9c6c2;line-height:0;letter-spacing:0.086px;left:763.56px;">09/16 16:00</div>
<div class="a" style="top:1084.13px;font-size:12.9px;color:#c9c6c2;line-height:0;letter-spacing:0.086px;left:860.22px;">09/17 00:00</div>
<div class="a" style="top:1084.13px;font-size:12.9px;color:#c9c6c2;line-height:0;letter-spacing:0.086px;left:949.88px;">09/17 08:00</div>
<div class="a" style="top:1084.13px;font-size:12.9px;color:#c9c6c2;line-height:0;letter-spacing:0.086px;left:1043.04px;">09/17 16:00</div>
<div class="a" style="top:1084.13px;font-size:12.9px;color:#c9c6c2;line-height:0;letter-spacing:0.086px;left:1139.70px;">09/18 00:00</div>
<div class="a" style="top:1084.13px;font-size:12.9px;color:#c9c6c2;line-height:0;letter-spacing:0.086px;left:1229.36px;">09/18 08:00</div>
<div class="a" style="top:1084.13px;font-size:12.9px;color:#c9c6c2;line-height:0;letter-spacing:0.086px;left:1322.52px;">09/18 16:00</div>
<div class="a" style="top:1084.13px;font-size:12.9px;color:#c9c6c2;line-height:0;letter-spacing:0.086px;left:1419.18px;">09/19 00:00</div>
<div class="a" style="top:1084.13px;font-size:12.9px;color:#c9c6c2;line-height:0;letter-spacing:0.086px;left:1508.84px;">09/19 08:00</div>
<div class="a" style="top:1084.13px;font-size:12.9px;color:#c9c6c2;line-height:0;letter-spacing:0.086px;left:1602.00px;">09/19 16:00</div>
<div class="a" style="top:1084.13px;font-size:12.9px;color:#c9c6c2;line-height:0;letter-spacing:0.086px;left:1698.66px;">09/20 00:00</div>
<div class="a" style="top:1084.13px;font-size:12.9px;color:#c9c6c2;line-height:0;letter-spacing:0.086px;left:1788.32px;">09/20 08:00</div>
<div class="a" style="top:1084.13px;font-size:12.9px;color:#c9c6c2;line-height:0;letter-spacing:0.086px;left:1881.48px;">09/20 16:00</div>
<div class="a" style="top:1128.63px;font-size:13.2px;color:#c9c6c2;line-height:0;letter-spacing:0.126px;left:50.67px;">capacity</div>
<div class="a" style="top:1128.66px;font-size:13.1px;color:#c9c6c2;line-height:0;letter-spacing:0.221px;left:139.45px;">limits</div>
<div class="a" style="top:472.74px;font-size:14.6px;color:#ec9656;line-height:0;letter-spacing:0.173px;-webkit-text-stroke:0.4px #ec9656;left:99.91px;">144.72%</div>
<div class="a" style="top:472.54px;font-size:14.6px;color:#ec9656;line-height:0;letter-spacing:0.273px;-webkit-text-stroke:0.4px #ec9656;left:356.40px;">151.99%</div>
<div class="a" style="top:473.24px;font-size:19.5px;color:#ec9656;line-height:0;letter-spacing:0.419px;-webkit-text-stroke:0.4px #ec9656;left:615.12px;">98.4%</div>
<div class="a" style="top:474.52px;font-size:21px;color:#ec9656;line-height:0;letter-spacing:-0.839px;-webkit-text-stroke:0.4px #ec9656;left:871.36px;">84.1%</div>
<div class="a" style="top:473.94px;font-size:17.5px;color:#e03a40;line-height:0;letter-spacing:-0.337px;-webkit-text-stroke:0.4px #e03a40;left:1127.29px;">17.65%</div>
<div class="a" style="top:474.60px;font-size:28px;color:#e5383f;line-height:0;letter-spacing:2.235px;-webkit-text-stroke:0.85px #e5383f;left:1387.88px;">N/A</div>
<div class="a" style="left:1034px;top:545px;width:1017px;height:25px;background:#1f2022"></div>
<div class="a" style="left:1034px;top:543.5px;width:1017px;height:2px;background:#9b8d7b"></div>
<div class="a" style="left:1034px;top:569.2px;width:1017px;height:2px;background:#9b8d7b"></div>
<div class="a" style="left:1034px;top:608.2px;width:1017px;height:2px;background:#9b8d7b"></div>
<div class="a" style="left:1034px;top:645.2px;width:1017px;height:2px;background:#9b8d7b"></div>
<div class="a" style="left:1034px;top:682.2px;width:1017px;height:2px;background:#9b8d7b"></div>
<div class="a" style="left:1480.2px;top:574px;width:2px;height:109px;background:#9b8d7b"></div>
<div class="a" style="left:1607.2px;top:574px;width:2px;height:109px;background:#9b8d7b"></div>
<div class="a" style="left:1734.4px;top:574px;width:2px;height:109px;background:#9b8d7b"></div>
<div class="a" style="left:1925.6px;top:574px;width:2px;height:109px;background:#9b8d7b"></div>
<div class="a" style="top:558.80px;font-size:15px;color:#3da4e8;line-height:0;letter-spacing:0.225px;-webkit-text-stroke:0.25px #3da4e8;left:1047.92px;">Namespace</div>
<div class="a" style="top:558.80px;font-size:15px;color:#3da4e8;line-height:0;-webkit-text-stroke:0.25px #3da4e8;left:1496.78px;">CPU</div>
<div class="a" style="top:558.80px;font-size:15px;color:#3da4e8;line-height:0;-webkit-text-stroke:0.25px #3da4e8;left:1622.92px;">RAM</div>
<div class="a" style="top:558.80px;font-size:15px;color:#3da4e8;line-height:0;-webkit-text-stroke:0.25px #3da4e8;left:1749.42px;">PV Storage</div>
<div class="a" style="top:558.80px;font-size:15px;color:#3da4e8;line-height:0;-webkit-text-stroke:0.25px #3da4e8;left:1942.83px;">Total</div>
<div class="a" style="top:591.60px;font-size:15px;color:#d0cdc9;line-height:0;letter-spacing:0.658px;left:1049.58px;">tldr</div>
<div class="a" style="left:1049px;top:600.8px;width:23.3px;height:1.2px;background:#cfcac5"></div>
<div class="a" style="top:591.60px;font-size:15px;color:#d0cdc9;line-height:0;letter-spacing:0.319px;left:1498.05px;">$0.00</div>
<div class="a" style="top:591.60px;font-size:15px;color:#d0cdc9;line-height:0;letter-spacing:0.319px;left:1624.65px;">$0.00</div>
<div class="a" style="top:591.60px;font-size:15px;color:#d0cdc9;line-height:0;left:1752.83px;">-</div>
<div class="a" style="top:591.60px;font-size:15px;color:#d0cdc9;line-height:0;left:1944.33px;">-</div>
<div class="a" style="top:627.50px;font-size:15px;color:#d0cdc9;line-height:0;letter-spacing:0.329px;left:1049.72px;">victoria-logs-single</div>
<div class="a" style="left:1049px;top:636.7px;width:130.7px;height:1.2px;background:#cfcac5"></div>
<div class="a" style="top:627.50px;font-size:15px;color:#d0cdc9;line-height:0;letter-spacing:0.319px;left:1498.05px;">$0.00</div>
<div class="a" style="top:627.50px;font-size:15px;color:#d0cdc9;line-height:0;letter-spacing:0.319px;left:1624.65px;">$0.00</div>
<div class="a" style="top:627.50px;font-size:15px;color:#d0cdc9;line-height:0;left:1751.35px;">$0.80</div>
<div class="a" style="top:627.50px;font-size:15px;color:#d0cdc9;line-height:0;left:1943.35px;">$0.80</div>
<div class="a" style="top:664.80px;font-size:15px;color:#d0cdc9;line-height:0;letter-spacing:0.407px;left:1049.72px;">victoria-metrics-k8s-stack</div>
<div class="a" style="left:1049px;top:674.0px;width:180.3px;height:1.2px;background:#cfcac5"></div>
<div class="a" style="top:664.80px;font-size:15px;color:#d0cdc9;line-height:0;letter-spacing:0.319px;left:1498.05px;">$0.00</div>
<div class="a" style="top:664.80px;font-size:15px;color:#d0cdc9;line-height:0;letter-spacing:0.319px;left:1624.65px;">$0.00</div>
<div class="a" style="top:664.80px;font-size:15px;color:#d0cdc9;line-height:0;left:1751.35px;">$2.73</div>
<div class="a" style="top:664.80px;font-size:15px;color:#d0cdc9;line-height:0;left:1943.35px;">$2.73</div>
<div class="a" style="top:697.67px;font-size:12.5px;color:#d0cdc9;line-height:0;left:1489.88px;">2</div>
<div class="a" style="top:697.67px;font-size:12.5px;color:#d0cdc9;line-height:0;left:1522.10px;">3</div>
<div class="a" style="top:697.67px;font-size:12.5px;color:#d0cdc9;line-height:0;left:1554.35px;">4</div>
<div class="a" style="top:697.67px;font-size:12.5px;color:#3da4e8;line-height:0;font-weight:700;left:1587.03px;">5</div>
</body></html>
